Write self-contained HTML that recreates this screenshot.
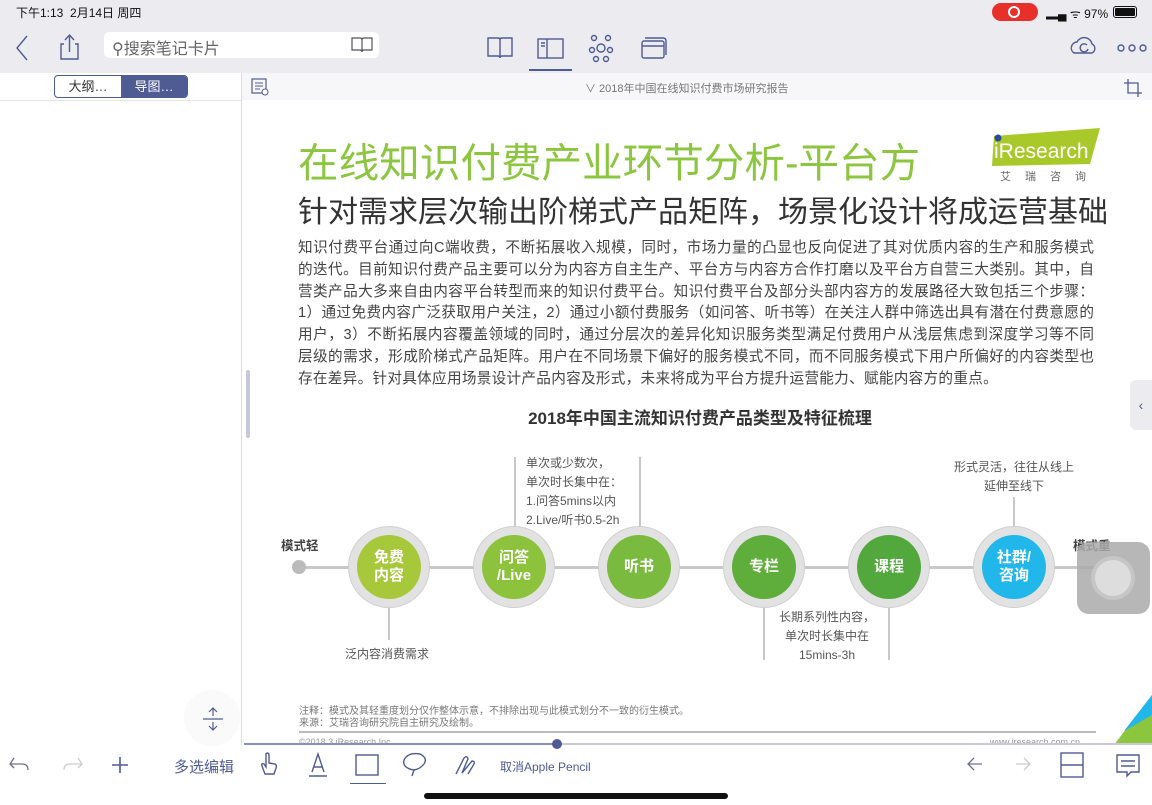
<!DOCTYPE html>
<html><head><meta charset="utf-8"><style>
*{margin:0;padding:0;box-sizing:border-box}
body{width:1152px;height:805px;overflow:hidden;background:#fff;font-family:"Liberation Sans","Noto Sans CJK SC",sans-serif;position:relative;color:#333}
.a{position:absolute}
.top{left:0;top:0;width:1152px;height:73px;background:#ebebf0}
.ln{white-space:nowrap;text-align:justify;text-align-last:justify;width:796px;font-size:14.6px;color:#444;height:21.8px;line-height:21.8px}
.c{width:82px;height:82px;border-radius:50%;background:#e2e2e2;border:1px solid #d0d0d0}
.c div{position:absolute;left:8px;top:8px;width:64px;height:64px;border-radius:50%;color:#fff;font-weight:bold;font-size:15px;display:flex;align-items:center;justify-content:center;text-align:center;line-height:18px}
.vl{width:2px;background:#c8c8c8}
.sm{font-size:12px;color:#555;line-height:19px;white-space:nowrap}
.ic{stroke:#4f5b93;fill:none;stroke-width:1.4}
</style></head><body>
<div class="a top"></div>
<div class="a" style="left:16px;top:4px;font-size:12px;color:#111">下午1:13&nbsp;&nbsp;2月14日 周四</div>
<div class="a" style="left:992px;top:3px;width:46px;height:18px;border-radius:9px;background:#e8302a"></div>
<div class="a" style="left:1008px;top:6px;width:12px;height:12px;border-radius:50%;border:2px solid #fff"></div>
<div class="a" style="left:1046px;top:5px;font-size:12px;color:#111">▂▄ ᯤ 97%</div>
<div class="a" style="left:1113px;top:6px;width:24px;height:12px;border:1px solid #111;border-radius:3px;padding:1px"><div style="background:#111;width:100%;height:100%;border-radius:1px"></div></div>
<svg class="a" style="left:0;top:28px" width="1152" height="40">
<path class="ic" d="M27 8 L17 20 L27 32" stroke-width="1.8"/>
<path class="ic" d="M64 16 H61 V31 H78 V16 H75 M69.5 7 V24 M65 12 L69.5 7 L74 12"/>
<path class="ic" d="M488 10 h10 q2 0 2 2 v18 q0-2-2-2 h-10z M512 10 h-10 q-2 0-2 2 v18 q0-2 2-2 h10z"/>
<rect class="ic" x="538" y="11" width="25" height="19"/><path class="ic" d="M547 11 V30 M541 15 h4 M541 18 h4"/>
<circle class="ic" cx="601" cy="20" r="4"/><circle class="ic" cx="594" cy="10" r="2.5"/><circle class="ic" cx="608" cy="10" r="2.5"/><circle class="ic" cx="592" cy="22" r="2.5"/><circle class="ic" cx="610" cy="22" r="2.5"/><circle class="ic" cx="596" cy="31" r="2.5"/><circle class="ic" cx="606" cy="31" r="2.5"/>
<rect class="ic" x="642" y="13" width="22" height="17" rx="2"/><path class="ic" d="M645 10 h18 q3 0 3 3 v14 M642 18 h22"/>
<path class="ic" d="M1074 25 a6 6 0 0 1 3-11 a8 8 0 0 1 15 2 a5 5 0 0 1 0 9z"/><path class="ic" d="M1087 17 a4 4 0 1 0 1 4"/>
<circle class="ic" cx="1121" cy="20" r="3"/><circle class="ic" cx="1132" cy="20" r="3"/><circle class="ic" cx="1143" cy="20" r="3"/>
</svg>
<div class="a" style="left:104px;top:32px;width:275px;height:26px;background:#fff;border-radius:5px"></div>
<div class="a" style="left:112px;top:35px;font-size:16px;color:#666">⚲搜索笔记卡片</div>
<svg class="a" style="left:350px;top:36px" width="24" height="18"><path d="M2 2 h8 q2 0 2 2 v12 q0-2-2-2 h-8z M22 2 h-8 q-2 0-2 2 v12 q0-2 2-2 h8z" fill="none" stroke="#555" stroke-width="1.2"/></svg>
<div class="a" style="left:529px;top:69px;width:43px;height:2px;background:#4f5b93"></div>
<div class="a" style="left:241px;top:73px;width:1px;height:672px;background:#ddd"></div>
<div class="a" style="left:0;top:100px;width:241px;height:1px;background:#e6e6e6"></div>
<div class="a" style="left:54px;top:75px;width:134px;height:23px;border:1px solid #4f5b93;border-radius:4px;overflow:hidden;font-size:13px;display:flex">
<div style="width:66px;text-align:center;line-height:21px;color:#333">大纲…</div><div style="flex:1;background:#4f5b93;color:#fff;text-align:center;line-height:21px">导图…</div></div>
<div class="a" style="left:242px;top:73px;width:910px;height:27px;background:#f7f7f9"></div>
<svg class="a" style="left:250px;top:77px" width="22" height="20"><rect x="2" y="2" width="14" height="14" fill="none" stroke="#4f5b93" stroke-width="1.2"/><path d="M5 6h8M5 9h8M5 12h5" stroke="#4f5b93"/><circle cx="15" cy="15" r="3" fill="#fff" stroke="#4f5b93"/></svg>
<div class="a" style="left:585px;top:80px;font-size:11px;color:#777">∨ 2018年中国在线知识付费市场研究报告</div>
<svg class="a" style="left:1123px;top:78px" width="20" height="20"><path d="M5 1 V15 H19 M1 5 H15 V19" fill="none" stroke="#4f5b93" stroke-width="1.3"/></svg>
<div class="a" style="left:246px;top:370px;width:4px;height:68px;background:#c8c8dc;border-radius:2px"></div>

<div class="a" style="left:298px;top:130px;font-size:40.6px;color:#8cc63f;white-space:nowrap">在线知识付费产业环节分析-平台方</div>
<div class="a" style="left:298px;top:187px;font-size:30px;color:#333;white-space:nowrap">针对需求层次输出阶梯式产品矩阵，场景化设计将成运营基础</div>
<svg class="a" style="left:990px;top:126px" width="112" height="58"><polygon points="4,10 110,2 100,38 2,40" fill="#a9c92b"/><circle cx="8" cy="12" r="3.5" fill="#2a4b9b"/><text x="4" y="32" font-size="21" fill="#fff" font-family="Liberation Sans">iResearch</text><text x="10" y="54" font-size="11" fill="#666" letter-spacing="14">艾瑞咨询</text></svg>

<div class="a" style="left:298px;top:238px">
<div class="ln">知识付费平台通过向C端收费，不断拓展收入规模，同时，市场力量的凸显也反向促进了其对优质内容的生产和服务模式</div>
<div class="ln">的迭代。目前知识付费产品主要可以分为内容方自主生产、平台方与内容方合作打磨以及平台方自营三大类别。其中，自</div>
<div class="ln">营类产品大多来自由内容平台转型而来的知识付费平台。知识付费平台及部分头部内容方的发展路径大致包括三个步骤：</div>
<div class="ln">1）通过免费内容广泛获取用户关注，2）通过小额付费服务（如问答、听书等）在关注人群中筛选出具有潜在付费意愿的</div>
<div class="ln">用户，3）不断拓展内容覆盖领域的同时，通过分层次的差异化知识服务类型满足付费用户从浅层焦虑到深度学习等不同</div>
<div class="ln">层级的需求，形成阶梯式产品矩阵。用户在不同场景下偏好的服务模式不同，而不同服务模式下用户所偏好的内容类型也</div>
<div class="ln" style="text-align-last:left;letter-spacing:0.3px">存在差异。针对具体应用场景设计产品内容及形式，未来将成为平台方提升运营能力、赋能内容方的重点。</div>
</div>
<div class="a" style="left:400px;top:404px;width:600px;text-align:center;font-size:17px;font-weight:bold;color:#333">2018年中国主流知识付费产品类型及特征梳理</div>

<div class="a" style="left:299px;top:566px;width:800px;height:3px;background:#c8c8c8"></div>
<div class="a" style="left:292px;top:560px;width:14px;height:14px;border-radius:50%;background:#bbb"></div>
<div class="a" style="left:281px;top:535px;font-size:12.5px;font-weight:bold;color:#444">模式轻</div>
<div class="a" style="left:1073px;top:535px;font-size:12.5px;font-weight:bold;color:#444">模式重</div>
<div class="a vl" style="left:514px;top:457px;height:70px"></div>
<div class="a vl" style="left:639px;top:457px;height:70px"></div>
<div class="a vl" style="left:1013px;top:497px;height:30px"></div>
<div class="a vl" style="left:388px;top:607px;height:33px"></div>
<div class="a vl" style="left:763px;top:607px;height:53px"></div>
<div class="a vl" style="left:888px;top:607px;height:53px"></div>
<div class="a sm" style="left:526px;top:454px">单次或少数次，<br>单次时长集中在：<br>1.问答5mins以内<br>2.Live/听书0.5-2h</div>
<div class="a sm" style="left:940px;top:458px;width:148px;text-align:center">形式灵活，往往从线上<br>延伸至线下</div>
<div class="a sm" style="left:345px;top:645px">泛内容消费需求</div>
<div class="a sm" style="left:765px;top:608px;width:124px;text-align:center">长期系列性内容，<br>单次时长集中在<br>15mins-3h</div>
<div class="a c" style="left:348px;top:526px"><div style="background:#a6c83a">免费<br>内容</div></div>
<div class="a c" style="left:473px;top:526px"><div style="background:#8cc23c">问答<br>/Live</div></div>
<div class="a c" style="left:598px;top:526px"><div style="background:#7aba3e">听书</div></div>
<div class="a c" style="left:723px;top:526px"><div style="background:#5fae3c">专栏</div></div>
<div class="a c" style="left:848px;top:526px"><div style="background:#52a83c">课程</div></div>
<div class="a c" style="left:973px;top:526px"><div style="background:#22b7ea">社群/<br>咨询</div></div>
<div class="a" style="left:1077px;top:542px;width:73px;height:72px;background:#aaa;border-radius:12px;opacity:.85"></div>
<div class="a" style="left:1095px;top:560px;width:36px;height:36px;border-radius:50%;background:#ddd;box-shadow:0 0 0 4px #c6c6c6"></div>
<div class="a" style="left:1130px;top:380px;width:22px;height:50px;background:#ebebf0;border-radius:6px 0 0 6px;color:#4f5b93;font-size:14px;line-height:50px;text-align:center">‹</div>

<div class="a" style="left:299px;top:706px;font-size:10px;color:#777;line-height:12px">注释：模式及其轻重度划分仅作整体示意，不排除出现与此模式划分不一致的衍生模式。<br>来源：艾瑞咨询研究院自主研究及绘制。</div>
<div class="a" style="left:299px;top:731px;width:797px;height:2px;background:#bbb"></div>
<div class="a" style="left:299px;top:737px;font-size:9px;color:#999">©2018.3 iResearch Inc.</div>
<div class="a" style="left:990px;top:737px;font-size:9px;color:#999">www.iresearch.com.cn</div>
<svg class="a" style="left:1110px;top:695px" width="42" height="50"><polygon points="42,0 42,50 4,50" fill="#8cc63f"/><polygon points="42,0 42,20 14,36" fill="#22b7ea"/></svg>
<div class="a" style="left:184px;top:690px;width:56px;height:56px;border-radius:50%;background:#fafafb"></div>
<svg class="a" style="left:200px;top:706px" width="26" height="26"><path d="M3 13 H23 M13 2 V10 M9 6 L13 2 L17 6 M13 24 V16 M9 20 L13 24 L17 20" stroke="#4f5b93" fill="none" stroke-width="1.2"/></svg>
<div class="a" style="left:244px;top:743px;width:908px;height:2px;background:#c8c8d8"></div>
<div class="a" style="left:244px;top:743px;width:313px;height:2px;background:#8890b8"></div>
<div class="a" style="left:552px;top:739px;width:10px;height:10px;border-radius:50%;background:#4f5b93"></div>
<svg class="a" style="left:0;top:748px" width="1152" height="36">
<path d="M14 10 L10 16 L14 20 M10 16 H22 q6 0 6 6" stroke="#6c7090" fill="none" stroke-width="1.3"/>
<path d="M78 10 L82 16 L78 20 M82 16 H70 q-6 0-6 6" stroke="#ccc" fill="none" stroke-width="1.3"/>
<path d="M120 9 V25 M112 17 H128" stroke="#4f5b93" stroke-width="1.6"/>
<path class="ic" d="M265 26 L262 18 q-1-3 2-2 l2 3 V6 q1-2 3 0 v9 l6 1 q2 1 1 4 l-2 6z"/>
<path class="ic" d="M312 24 L318 6 L324 24 M314 19 H322 M309 28 H327"/>
<rect class="ic" x="356" y="7" width="22" height="20"/><path d="M350 36 H386" stroke="#4f5b93" stroke-width="2"/>
<path class="ic" d="M414 22 q-12-2-10-10 q4-8 16-6 q8 4 4 10 q-4 5-10 6 l-2 6"/>
<path class="ic" d="M456 26 l8-16 q3-3 4 1 l-6 14 l10-12 q3 0 2 3 l-6 10"/>
<path d="M982 16 H968 M974 10 L968 16 L974 22" stroke="#6c7090" fill="none" stroke-width="1.3"/>
<path d="M1016 16 H1030 M1024 10 L1030 16 L1024 22" stroke="#ccc" fill="none" stroke-width="1.3"/>
<rect class="ic" x="1061" y="5" width="22" height="24"/><path class="ic" d="M1061 17 H1083"/>
<path class="ic" d="M1117 7 H1139 V24 H1131 L1127 28 V24 H1117z M1121 13 h14 M1121 18 h14"/>
</svg>
<div class="a" style="left:174px;top:756px;font-size:15px;color:#4f5b93">多选编辑</div>
<div class="a" style="left:500px;top:758px;font-size:12px;color:#4f5b93">取消Apple Pencil</div>
<div class="a" style="left:424px;top:793px;width:304px;height:6px;background:#111;border-radius:3px"></div>
</body></html>
